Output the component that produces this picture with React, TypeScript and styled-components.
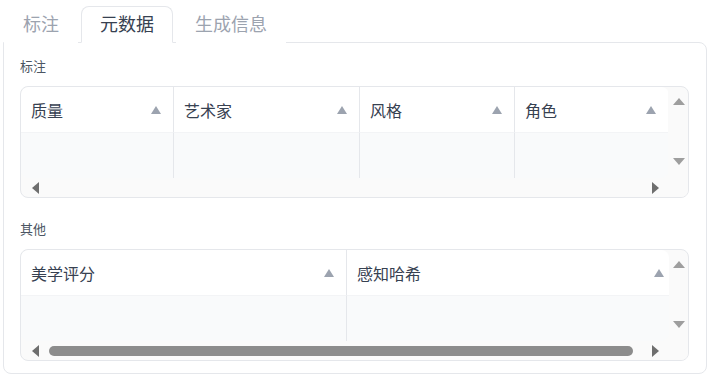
import React, { useState } from "react";
import styled, { createGlobalStyle } from "styled-components";

const GlobalStyle = createGlobalStyle`
  html, body {
    margin: 0;
    padding: 0;
    background: #fff;
  }
  body {
    font-family: "Noto Sans CJK SC", "Noto Sans", sans-serif;
    color: #374151;
  }
`;

const BAR = 19;

const Page = styled.div`
  padding: 6px 4px 6px 3px;
`;

const TabBar = styled.div`
  display: flex;
  gap: 3px;
  padding-left: 1px;
  position: relative;
  z-index: 1;
`;

const Tab = styled.button<{ $active?: boolean }>`
  font-family: inherit;
  font-size: 18px;
  line-height: 22px;
  padding: 0 18px 3px;
  height: 37px;
  margin-bottom: -1px;
  background: #fff;
  cursor: pointer;
  color: ${(p) => (p.$active ? "#374151" : "#9ca3af")};
  border: 1px solid ${(p) => (p.$active ? "#e5e7eb" : "transparent")};
  border-bottom-color: ${(p) => (p.$active ? "#fff" : "transparent")};
  border-radius: 8px 8px 0 0;
`;

const Panel = styled.div`
  border: 1px solid #e5e7eb;
  border-radius: 0 8px 8px 8px;
  padding: 14px 17px 12px 16px;
  display: flex;
  flex-direction: column;
  gap: 22px;
`;

const Section = styled.section`
  display: flex;
  flex-direction: column;
  gap: 11px;
`;

const SectionLabel = styled.div`
  font-size: 13px;
  line-height: 18px;
  color: #4b5563;
`;

const ScrollBox = styled.div`
  border: 1px solid #e5e7eb;
  border-radius: 8px;
  overflow: hidden;
  background: #fafafa;
  display: grid;
  grid-template-columns: minmax(0, 1fr) ${BAR}px;
  grid-template-rows: auto ${BAR}px;
`;

const Viewport = styled.div`
  overflow: hidden;
  border-radius: 8px;
`;

const Table = styled.table<{ $w: number }>`
  width: ${(p) => p.$w}px;
  border-collapse: separate;
  border-spacing: 0;
  table-layout: fixed;
`;

const HeadCell = styled.th<{ $w: number }>`
  width: ${(p) => p.$w}px;
  height: 46px;
  box-sizing: border-box;
  padding: 0 12px 0 10px;
  background: #fff;
  font-weight: 400;
  font-size: 16px;
  text-align: left;
  color: #374151;
  border-bottom: 1px solid #f3f4f6;
  border-left: 1px solid #e5e7eb;
  &:first-child {
    border-left: none;
  }
`;

const HeadInner = styled.div`
  display: flex;
  align-items: center;
  justify-content: space-between;
`;

const SortIcon = styled.span`
  width: 0;
  height: 0;
  border-left: 5px solid transparent;
  border-right: 5px solid transparent;
  border-bottom: 8px solid #9ca3af;
`;

const BodyCell = styled.td`
  height: 45px;
  padding: 0;
  background: #f9fafb;
  border-left: 1px solid #e5e7eb;
  &:first-child {
    border-left: none;
  }
`;

const VBar = styled.div`
  display: flex;
  flex-direction: column;
  justify-content: space-between;
  align-items: center;
  padding: 11px 0 13px;
`;

const HBar = styled.div`
  display: flex;
  align-items: center;
`;

const ArrowBtn = styled.div<{ $w: number }>`
  width: ${(p) => p.$w}px;
  flex: none;
  display: flex;
  align-items: center;
  justify-content: center;
`;

const Track = styled.div`
  flex: 1;
  height: 100%;
  display: flex;
  align-items: center;
`;

const Thumb = styled.div`
  height: 10px;
  border-radius: 5px;
  background: #8c8c8c;
`;

const Corner = styled.div`
  background: #fafafa;
`;

type Dir = "up" | "down" | "left" | "right";

const Arrow = ({ dir, color }: { dir: Dir; color: string }) => {
  const vertical = dir === "up" || dir === "down";
  const w = vertical ? 12 : 7;
  const h = vertical ? 7 : 12;
  const pts: Record<Dir, string> = {
    up: "0,7 6,0 12,7",
    down: "0,0 12,0 6,7",
    left: "7,0 7,12 0,6",
    right: "0,0 7,6 0,12",
  };
  return (
    <svg width={w} height={h} viewBox={`0 0 ${w} ${h}`}>
      <polygon points={pts[dir]} fill={color} />
    </svg>
  );
};

type Col = { name: string; width: number };

const VIEW = 647;

const DataTable = ({ cols }: { cols: Col[] }) => {
  const [sortKey, setSortKey] = useState<string | null>(null);
  const total = cols.reduce((s, c) => s + c.width, 0);
  const trackW = VIEW - 56;
  const thumbW = total > VIEW ? Math.round((trackW * VIEW) / total) : 0;
  return (
    <ScrollBox>
      <Viewport>
        <Table $w={total}>
          <thead>
            <tr>
              {cols.map((c) => (
                <HeadCell key={c.name} $w={c.width} onClick={() => setSortKey(c.name)}>
                  <HeadInner>
                    <span>{c.name}</span>
                    <SortIcon title={sortKey === c.name ? "sorted" : undefined} />
                  </HeadInner>
                </HeadCell>
              ))}
            </tr>
          </thead>
          <tbody>
            <tr>
              {cols.map((c) => (
                <BodyCell key={c.name} />
              ))}
            </tr>
          </tbody>
        </Table>
      </Viewport>
      <VBar>
        <Arrow dir="up" color="#9e9e9e" />
        <Arrow dir="down" color="#9e9e9e" />
      </VBar>
      <HBar>
        <ArrowBtn $w={28}>
          <Arrow dir="left" color="#6e6e6e" />
        </ArrowBtn>
        <Track>{thumbW > 0 && <Thumb style={{ width: thumbW }} />}</Track>
        <ArrowBtn $w={28}>
          <Arrow dir="right" color="#6e6e6e" />
        </ArrowBtn>
      </HBar>
      <Corner />
    </ScrollBox>
  );
};

const tagCols: Col[] = [
  { name: "质量", width: 152 },
  { name: "艺术家", width: 186 },
  { name: "风格", width: 155 },
  { name: "角色", width: 154 },
];

const otherCols: Col[] = [
  { name: "美学评分", width: 325 },
  { name: "感知哈希", width: 330 },
];

const tabs = ["标注", "元数据", "生成信息"];

export default function App() {
  const [active, setActive] = useState("元数据");
  return (
    <Page>
      <GlobalStyle />
      <TabBar>
        {tabs.map((t) => (
          <Tab key={t} $active={t === active} onClick={() => setActive(t)}>
            {t}
          </Tab>
        ))}
      </TabBar>
      <Panel>
        <Section>
          <SectionLabel>标注</SectionLabel>
          <DataTable cols={tagCols} />
        </Section>
        <Section>
          <SectionLabel>其他</SectionLabel>
          <DataTable cols={otherCols} />
        </Section>
      </Panel>
    </Page>
  );
}
